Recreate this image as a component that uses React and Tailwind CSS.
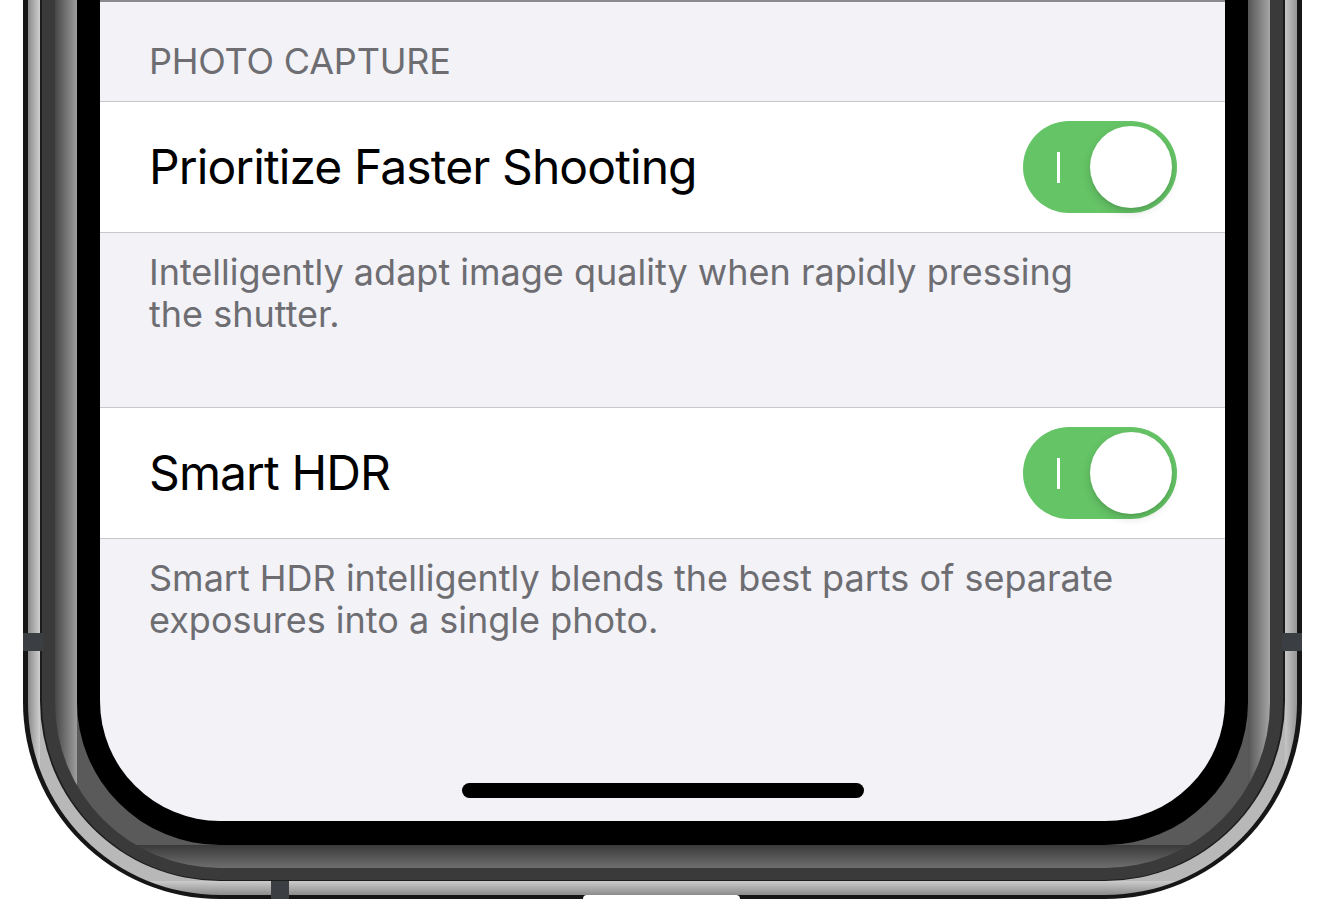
import React from 'react';

const SETTINGS = [
  {
    id: 'faster-shooting',
    label: 'Prioritize Faster Shooting',
    footer: ['Intelligently adapt image quality when rapidly pressing', 'the shutter.'],
    footerHeight: 'h-[174px]',
  },
  {
    id: 'smart-hdr',
    label: 'Smart HDR',
    footer: ['Smart HDR intelligently blends the best parts of separate', 'exposures into a single photo.'],
    footerHeight: 'flex-1',
  },
];

function Toggle() {
  return (
    <div className="flex h-[92px] w-[154px] shrink-0 items-center justify-between rounded-full bg-[#65c466] pl-[34px] pr-[5px]">
      <span className="h-[31px] w-[3px] bg-white" />
      <span className="h-[82px] w-[82px] rounded-full bg-white shadow-[0_4px_10px_rgba(0,0,0,0.16),0_2px_2px_rgba(0,0,0,0.05)]" />
    </div>
  );
}

function SettingRow({ label, footer, footerHeight }) {
  return (
    <>
      <div className="flex h-[132px] items-center justify-between border-y border-[#c8c7cc] bg-white pl-[49px] pr-[48px]">
        <span className="text-[48px] leading-none tracking-[-0.9px] text-black">{label}</span>
        <Toggle />
      </div>
      <div className={`${footerHeight} pl-[49px] pt-[18px] text-[36px] leading-[42px] text-[#6d6d72]`}>
        {footer[0]}
        <br />
        {footer[1]}
      </div>
    </>
  );
}

export default function App() {
  return (
    <div className="h-[912px] w-[1325px] overflow-hidden bg-white font-['Inter','Liberation_Sans',sans-serif]">
      {/* phone frame, layered bands from the outside in */}
      <div className="relative ml-[23px] w-[1279px] rounded-b-[197px] bg-[#161616] px-[5px] pb-[4px]">
        <div className="rounded-b-[192px] bg-[linear-gradient(180deg,transparent_calc(100%-14px),#cbcbcb_calc(100%-14px),#8c8c8c_100%),linear-gradient(90deg,#8a8a8a_0px,#cfcfcf_12px,#b8b8b8_12px,#b8b8b8_calc(100%-12px),#c6c6c6_calc(100%-12px),#969696_100%)] px-[12px] pb-[14px]">
          <div className="rounded-b-[180px] bg-[#1c1c1c] px-[2px] pb-[1px]">
            <div className="rounded-b-[178px] bg-[#3a3a3a] px-[13px] pb-[12px]">
              <div className="rounded-b-[165px] bg-[linear-gradient(180deg,transparent_calc(100%-23px),#3a3a3a_calc(100%-23px),#6e6e6e_100%),linear-gradient(90deg,#474747_0px,#9d9d9d_22px,#5a5a5a_22px,#5a5a5a_calc(100%-22px),#555555_calc(100%-22px),#a6a6a6_100%)] px-[22px] pb-[23px]">
                <div className="rounded-b-[143px] bg-black px-[23px] pb-[24px]">
                  {/* screen */}
                  <div className="flex h-[821px] flex-col overflow-hidden rounded-b-[120px] border-t-2 border-[#8a8a8f] bg-[#f2f2f7]">
                    <div className="h-[99px] pl-[49px] pt-[41px] text-[36px] leading-none tracking-[-0.2px] text-[#6d6d72]">
                      PHOTO CAPTURE
                    </div>
                    {SETTINGS.map((s) => (
                      <SettingRow key={s.id} {...s} />
                    ))}
                    <div className="mx-auto mb-[23px] h-[15px] w-[402px] shrink-0 rounded-full bg-black" />
                  </div>
                </div>
              </div>
            </div>
          </div>
        </div>

        {/* antenna bands and the bottom port cut, laid over the frame */}
        <span className="absolute left-0 top-[633px] h-[18px] w-[20px] bg-[#3b3e43]" />
        <span className="absolute right-0 top-[633px] h-[18px] w-[20px] bg-[#3b3e43]" />
        <span className="absolute bottom-0 left-[248px] h-[18px] w-[18px] bg-[#3b3e43]" />
        <span className="absolute bottom-0 left-[560px] h-[4px] w-[157px] rounded-t-[6px] bg-white" />
      </div>
    </div>
  );
}
